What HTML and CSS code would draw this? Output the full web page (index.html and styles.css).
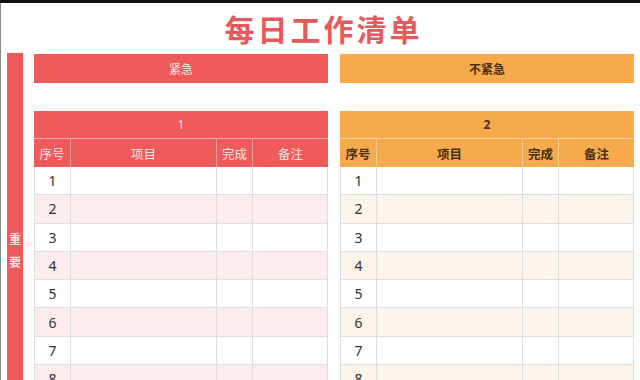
FILE: index.html
```html
<!DOCTYPE html>
<html lang="zh">
<head>
<meta charset="utf-8">
<link rel="stylesheet" href="styles.css">
</head>
<body>
<div class="topbar"></div>
<div class="page">
  <h1 class="title">每日工作清单</h1>
  <div class="main">
    <div class="side"><span>重</span><span>要</span></div>
    <div class="quads">
      <div class="quad red">
        <div class="urg">紧急</div>
        <div class="tbl">
          <div class="tcap">1</div>
          <div class="row head"><div>序号</div><div>项目</div><div>完成</div><div>备注</div></div>
          <div class="row"><div>1</div><div></div><div></div><div></div></div>
          <div class="row alt"><div>2</div><div></div><div></div><div></div></div>
          <div class="row"><div>3</div><div></div><div></div><div></div></div>
          <div class="row alt"><div>4</div><div></div><div></div><div></div></div>
          <div class="row"><div>5</div><div></div><div></div><div></div></div>
          <div class="row alt"><div>6</div><div></div><div></div><div></div></div>
          <div class="row"><div>7</div><div></div><div></div><div></div></div>
          <div class="row alt"><div>8</div><div></div><div></div><div></div></div>
        </div>
      </div>
      <div class="quad orange">
        <div class="urg">不紧急</div>
        <div class="tbl">
          <div class="tcap">2</div>
          <div class="row head"><div>序号</div><div>项目</div><div>完成</div><div>备注</div></div>
          <div class="row"><div>1</div><div></div><div></div><div></div></div>
          <div class="row alt"><div>2</div><div></div><div></div><div></div></div>
          <div class="row"><div>3</div><div></div><div></div><div></div></div>
          <div class="row alt"><div>4</div><div></div><div></div><div></div></div>
          <div class="row"><div>5</div><div></div><div></div><div></div></div>
          <div class="row alt"><div>6</div><div></div><div></div><div></div></div>
          <div class="row"><div>7</div><div></div><div></div><div></div></div>
          <div class="row alt"><div>8</div><div></div><div></div><div></div></div>
        </div>
      </div>
    </div>
  </div>
</div>
</body>
</html>
```

FILE: styles.css
```css
html, body {
  margin: 0;
  padding: 0;
  background: #fff;
  overflow: hidden;
  height: 380px;
}
body {
  font-family: "Noto Sans", "Noto Sans CJK SC", sans-serif;
}
.topbar {
  height: 3px;
  background: #111;
}
.page {
  border-left: 1px solid #8a8a8a;
  height: 377px;
}
.title {
  margin: 0;
  height: 50px;
  line-height: 50px;
  text-align: center;
  font-family: "Noto Sans CJK SC", sans-serif;
  font-size: 30px;
  font-weight: 700;
  letter-spacing: 3px;
  padding-left: 6px;
  color: #e55a5c;
}
.main {
  display: flex;
  align-items: flex-start;
  gap: 11px;
  padding-left: 6px;
}
.quads {
  display: flex;
  gap: 12px;
}
.side {
  width: 16px;
  height: 400px;
  background: #ef5a5a;
  display: flex;
  flex-direction: column;
  align-items: center;
  padding-top: 178px;
  box-sizing: border-box;
  gap: 7px;
  color: #fde0e0;
  font-family: "Noto Sans CJK SC", sans-serif;
  font-size: 12px;
  font-weight: 700;
  line-height: 16px;
}
.quad {
  width: 294px;
  padding-top: 1px;
}
.urg {
  height: 29px;
  line-height: 29px;
  text-align: center;
  font-family: "Noto Sans CJK SC", sans-serif;
  font-size: 12px;
}
.red .urg { background: #ef5a5a; color: #fde5e5; }
.orange .urg { background: #f6aa4c; color: #4a3010; font-weight: 700; }
.tbl {
  margin-top: 28px;
}
.tcap {
  height: 28px;
  line-height: 28px;
  text-align: center;
  font-size: 12px;
  border-bottom: 1px solid rgba(255,255,255,0.45);
  box-sizing: border-box;
}
.row {
  display: grid;
  grid-template-columns: 37px 146px 36px 75px;
  height: 28.3px;
  box-sizing: border-box;
  border-bottom: 1px solid #dedede;
}
.row > div {
  border-right: 1px solid #dedede;
  display: flex;
  align-items: center;
  justify-content: center;
  font-size: 14px;
  color: #333;
}
.row > div:first-child { border-left: 1px solid #dedede; }
.row.head {
  height: 28px;
  border-bottom: none;
}
.row.head > div {
  font-family: "Noto Sans CJK SC", sans-serif;
  font-size: 12.5px;
  border-color: rgba(255,255,255,0.4);
}
.red .tcap, .red .head { background: #ef5a5a; color: #fde5e5; }
.orange .tcap, .orange .head { background: #f6aa4c; color: #4a3010; font-weight: 700; }
.orange .row.head > div { color: #4a3010; font-weight: 700; }
.red .row.head > div { color: #fde5e5; }
.red .alt { background: #fdeced; }
.orange .alt { background: #fdf4ec; }
.row.head > div:first-child { border-left: none; }
.row.head > div:last-child { border-right: none; }
```
